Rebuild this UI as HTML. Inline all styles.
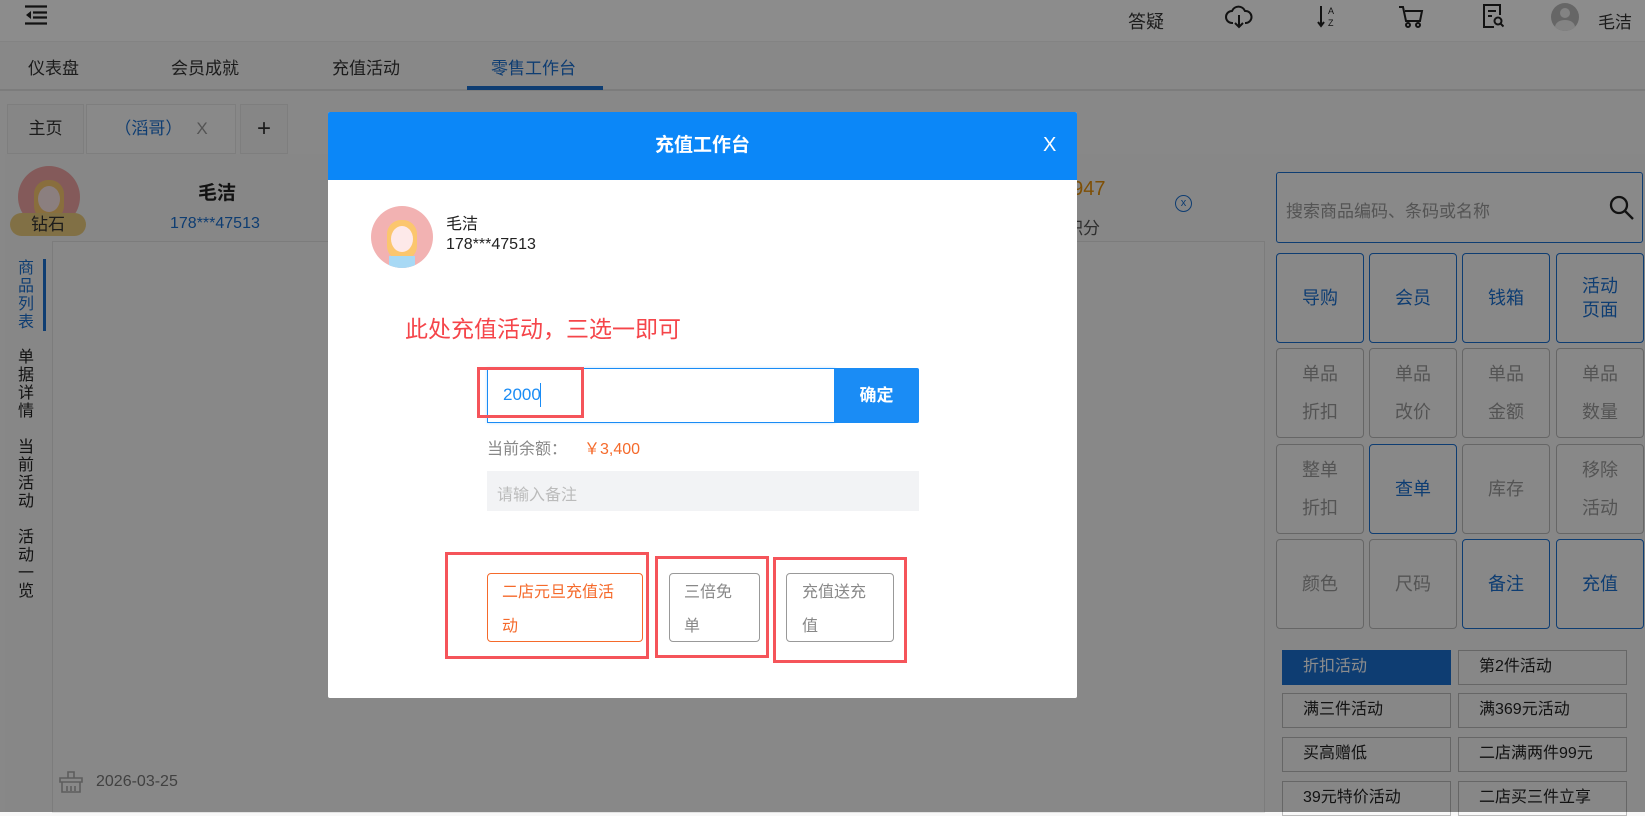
<!DOCTYPE html>
<html><head><meta charset="utf-8"><style>
*{box-sizing:border-box;margin:0;padding:0}
body{width:1645px;height:812px;overflow:hidden;position:relative;background:#f8f8f8;font-family:"Liberation Sans","Noto Sans CJK SC",sans-serif;color:#333}
.a{position:absolute}
.top{left:0;top:0;width:1645px;height:42px;background:#fff;border-bottom:1px solid #eee}
.nav{left:0;top:42px;width:1645px;height:49px;background:#f7f7f7;border-bottom:2px solid #e2e2e2;font-size:17px}
.nav span{position:absolute;top:12px}
.tab{top:104px;height:50px;border:1px solid #e6e6e6;background:#f5f5f5;font-size:17px;line-height:48px;text-align:center}
.vt{left:18px;width:18px;font-size:16px;line-height:18px;color:#222}
.gb{width:88px;height:90px;border:1.5px solid #1a6fd0;border-radius:4px;display:flex;align-items:center;justify-content:center;text-align:center;font-size:18px;color:#1a6fd0;line-height:24px;background:#f8f8f8}
.gb.g{border-color:#bbb;color:#999;line-height:38px}
.ab{width:169px;height:35px;border:1.5px solid #bbb;font-size:16px;line-height:32px;padding-left:20px;color:#222}
.ov{left:0;top:0;width:1645px;height:812px;background:rgba(0,0,0,.45)}
.rb{border:3px solid #f5545a}
</style></head><body>
<div class="a top">
<svg class="a" style="left:24px;top:5px" width="24" height="20" viewBox="0 0 24 20"><path d="M1 1.5h22M9 7.5h14M9 12.5h14M1 18.5h22" stroke="#222" stroke-width="2.2"/><path d="M2 10l5-4v8z" fill="#222"/></svg>
<span class="a" style="left:1128px;top:8px;font-size:18px">答疑</span>
<svg class="a" style="left:1225px;top:5px" width="28" height="24" viewBox="0 0 28 24" fill="none" stroke="#222" stroke-width="2"><path d="M8 18H7a6 6 0 0 1 0-12 7 7 0 0 1 13 0 6 6 0 0 1 1 12h-1"/><path d="M14 10v12M10 18l4 4 4-4"/></svg>
<svg class="a" style="left:1317px;top:4px" width="20" height="24" viewBox="0 0 20 24" fill="none" stroke="#222" stroke-width="2"><path d="M4 2v20M1 18l3 4 3-4"/><text x="11" y="10" font-size="9" fill="#222" stroke="none" font-family="Liberation Sans">A</text><text x="11" y="22" font-size="9" fill="#222" stroke="none" font-family="Liberation Sans">Z</text></svg>
<svg class="a" style="left:1398px;top:5px" width="26" height="24" viewBox="0 0 26 24" fill="none" stroke="#222" stroke-width="2"><path d="M1 2h4l3 14h14l2-10H7"/><circle cx="10" cy="20" r="2"/><circle cx="20" cy="20" r="2"/></svg>
<svg class="a" style="left:1482px;top:3px" width="22" height="26" viewBox="0 0 22 26" fill="none" stroke="#222" stroke-width="2"><path d="M12 24H2V2h16v10M6 8h8M6 13h4"/><circle cx="16" cy="18" r="3.5"/><path d="M18.5 20.5l3 3"/></svg>
<div class="a" style="left:1551px;top:3px;width:28px;height:28px;border-radius:50%;background:#bbb;overflow:hidden"><div class="a" style="left:9px;top:5px;width:10px;height:10px;border-radius:50%;background:#eee"></div><div class="a" style="left:4px;top:17px;width:20px;height:14px;border-radius:50%;background:#eee"></div></div>
<span class="a" style="left:1598px;top:8px;font-size:17px">毛洁</span>
</div>
<div class="a nav"><span style="left:28px">仪表盘</span><span style="left:171px">会员成就</span><span style="left:332px">充值活动</span><span style="left:491px;color:#1a6fd0">零售工作台</span><div class="a" style="left:467px;top:44px;width:136px;height:4px;background:#1a6fd0"></div></div>
<div class="a tab" style="left:7px;width:77px">主页</div>
<div class="a tab" style="left:86px;width:150px;background:#fafafa;color:#1a6fd0">（滔哥）<span style="color:#999;margin-left:14px">X</span></div>
<div class="a tab" style="left:240px;width:48px;font-size:24px">+</div>
<div class="a" style="left:5px;top:154px;width:1640px;height:658px;background:#f6f6f6"></div>
<div class="a" style="left:18px;top:166px;width:62px;height:62px;border-radius:50%;background:#f0a4a4;overflow:hidden"><div class="a" style="left:16px;top:14px;width:30px;height:40px;border-radius:14px;background:#f9c870"></div><div class="a" style="left:20px;top:20px;width:22px;height:26px;border-radius:50%;background:#fde8e8"></div></div>
<div class="a" style="left:10px;top:213px;width:76px;height:23px;border-radius:12px;background:#eccd7e;font-size:17px;text-align:center;line-height:23px">钻石</div>
<div class="a" style="left:198px;top:178px;font-size:19px;font-weight:bold;color:#222">毛洁</div>
<div class="a" style="left:170px;top:215px;font-size:16px;color:#1a6fd0">178***47513</div>
<div class="a" style="left:1061px;top:178px;font-size:20px;color:#e6900a">5947</div>
<div class="a" style="left:1066px;top:214px;font-size:17px;color:#555">积分</div>
<div class="a" style="left:1175px;top:195px;width:17px;height:17px;border:1.5px solid #1a6fd0;border-radius:50%;font-size:11px;line-height:14px;text-align:center;color:#1a6fd0">x</div>
<div class="a" style="left:52px;top:241px;width:1213px;height:572px;border:1px solid #e2e2e2;background:#f7f7f7"></div>
<div class="a vt" style="top:260px;color:#1a6fd0">商品列表</div>
<div class="a" style="left:43px;top:259px;width:3px;height:72px;background:#1a6fd0"></div>
<div class="a vt" style="top:349px">单据详情</div>
<div class="a vt" style="top:439px">当前活动</div>
<div class="a vt" style="top:529px">活动一览</div>
<svg class="a" style="left:58px;top:770px" width="26" height="24" viewBox="0 0 26 24" fill="none" stroke="#aaa" stroke-width="1.6"><path d="M10 8V2h6v6M2 8h22v4H2zM4 12v10h18V12M9 16v5M13 16v5M17 16v5"/></svg>
<div class="a" style="left:96px;top:773px;font-size:16px;color:#777">2026-03-25</div>
<div class="a" style="left:1276px;top:172px;width:367px;height:71px;border:1.5px solid #1a6fd0;border-radius:3px;background:#fafafa"><span class="a" style="left:9px;top:24px;font-size:17px;color:#999">搜索商品编码、条码或名称</span><svg class="a" style="left:332px;top:22px" width="26" height="26" viewBox="0 0 26 26" fill="none" stroke="#222" stroke-width="2.3"><circle cx="10" cy="10" r="8"/><path d="M16 16l8 8"/></svg></div>
<div class="a gb" style="left:1276px;top:253px">导购</div>
<div class="a gb" style="left:1369px;top:253px">会员</div>
<div class="a gb" style="left:1462px;top:253px">钱箱</div>
<div class="a gb" style="left:1556px;top:253px">活动<br>页面</div>
<div class="a gb g" style="left:1276px;top:348px">单品<br>折扣</div>
<div class="a gb g" style="left:1369px;top:348px">单品<br>改价</div>
<div class="a gb g" style="left:1462px;top:348px">单品<br>金额</div>
<div class="a gb g" style="left:1556px;top:348px">单品<br>数量</div>
<div class="a gb g" style="left:1276px;top:444px">整单<br>折扣</div>
<div class="a gb" style="left:1369px;top:444px">查单</div>
<div class="a gb g" style="left:1462px;top:444px">库存</div>
<div class="a gb g" style="left:1556px;top:444px">移除<br>活动</div>
<div class="a gb g" style="left:1276px;top:539px">颜色</div>
<div class="a gb g" style="left:1369px;top:539px">尺码</div>
<div class="a gb" style="left:1462px;top:539px">备注</div>
<div class="a gb" style="left:1556px;top:539px">充值</div>
<div class="a ab" style="left:1282px;top:650px;background:#1a6fd0;border-color:#1a6fd0;color:#fff">折扣活动</div>
<div class="a ab" style="left:1458px;top:650px">第2件活动</div>
<div class="a ab" style="left:1282px;top:693px">满三件活动</div>
<div class="a ab" style="left:1458px;top:693px">满369元活动</div>
<div class="a ab" style="left:1282px;top:737px">买高赠低</div>
<div class="a ab" style="left:1458px;top:737px">二店满两件99元</div>
<div class="a ab" style="left:1282px;top:781px">39元特价活动</div>
<div class="a ab" style="left:1458px;top:781px">二店买三件立享</div>
<div class="a ov"></div>
<div class="a" style="left:328px;top:112px;width:749px;height:586px;background:#fff;border-radius:2px;overflow:hidden">
<div class="a" style="left:0;top:0;width:749px;height:68px;background:#0b87f8;color:#fff;font-size:19px;font-weight:bold;text-align:center;line-height:68px">充值工作台</div>
<div class="a" style="left:715px;top:22px;color:#fff;font-size:20px">X</div>
<div class="a" style="left:43px;top:94px;width:62px;height:62px;border-radius:50%;background:#f2b2b2;overflow:hidden"><div class="a" style="left:16px;top:14px;width:30px;height:40px;border-radius:14px;background:#fbc66e"></div><div class="a" style="left:20px;top:20px;width:22px;height:26px;border-radius:50%;background:#fde9e9"></div><div class="a" style="left:18px;top:50px;width:26px;height:16px;background:#a7d9f5"></div></div>
<div class="a" style="left:118px;top:98px;font-size:16px;color:#222">毛洁</div>
<div class="a" style="left:118px;top:124px;font-size:16px;color:#222">178***47513</div>
<div class="a" style="left:77px;top:198px;font-size:23px;color:#f5454a">此处充值活动，三选一即可</div>
<div class="a" style="left:159px;top:256px;width:348px;height:55px;border:1px solid #1a8cf5;box-shadow:0 0 3px #bfe0ff"><span class="a" style="left:15px;top:16px;font-size:17px;color:#1a8cf5">2000</span><div class="a" style="left:52px;top:14px;width:1px;height:24px;background:#1a8cf5"></div></div>
<div class="a" style="left:506px;top:256px;width:85px;height:55px;background:#1a8cf5;color:#fff;font-size:17px;font-weight:bold;text-align:center;line-height:55px;border-radius:0 2px 2px 0">确定</div>
<div class="a" style="left:159px;top:323px;font-size:16px;color:#888">当前余额：</div>
<div class="a" style="left:256px;top:323px;font-size:16px;color:#f56a2b">￥3,400</div>
<div class="a" style="left:159px;top:359px;width:432px;height:40px;background:#f2f3f5"><span class="a" style="left:10px;top:10px;font-size:16px;color:#bbb">请输入备注</span></div>
<div class="a" style="left:159px;top:461px;width:156px;height:69px;border:1px solid #f56a2b;border-radius:4px;color:#f56a2b;font-size:16px;line-height:34px;padding:2px 14px">二店元旦充值活动</div>
<div class="a" style="left:341px;top:461px;width:91px;height:69px;border:1px solid #999;border-radius:4px;color:#888;font-size:16px;line-height:34px;padding:2px 14px">三倍免单</div>
<div class="a" style="left:458px;top:461px;width:108px;height:69px;border:1px solid #999;border-radius:4px;color:#888;font-size:16px;line-height:34px;padding:2px 15px">充值送充值</div>
<div class="a rb" style="left:149px;top:255px;width:107px;height:51px"></div>
<div class="a rb" style="left:117px;top:440px;width:204px;height:107px"></div>
<div class="a rb" style="left:327px;top:444px;width:114px;height:102px"></div>
<div class="a rb" style="left:445px;top:445px;width:134px;height:106px"></div>
</div>
</body></html>
